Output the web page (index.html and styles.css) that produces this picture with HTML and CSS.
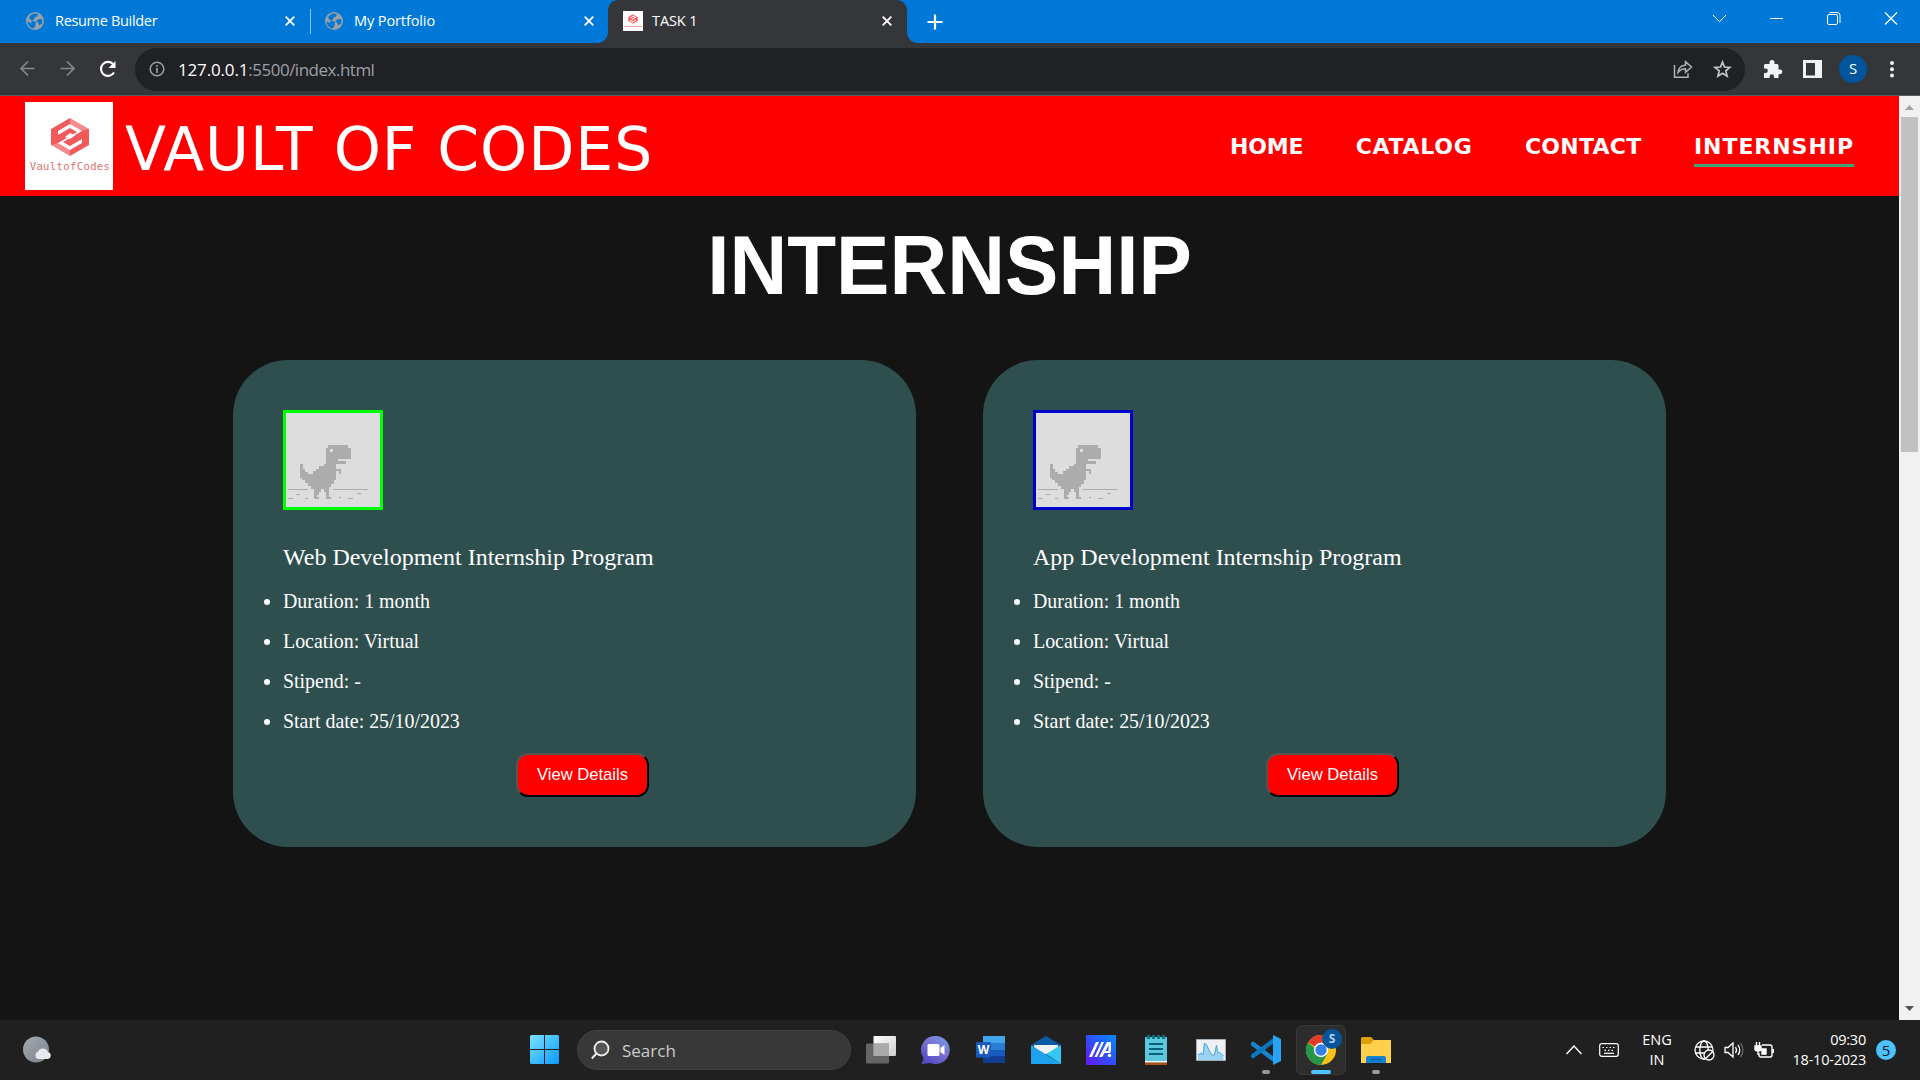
FILE: index.html
```html
<!DOCTYPE html>
<html lang="en">
<head>
<meta charset="utf-8">
<title>TASK 1</title>
<link rel="stylesheet" href="styles.css">
</head>
<body>
<svg class="defs" width="0" height="0">
  <defs>
    <symbol id="globe" viewBox="0 0 18 18"><circle cx="9" cy="9" r="9" fill="#9aa0a6"/><path d="M9 1.500 12 2l-1 2.500-2.500 1-.5 2L5.500 9H8l2 1.500L9.500 13 8 16.500C4 16 1.500 13 1.500 9.500L5 11l1-2-3-3C4 3 6.500 1.500 9 1.500ZM13 7l3.500.5-.5 4-2.500 2-1.500-3-2-1Z" fill="#0078d7"/></symbol>
    <symbol id="cross" viewBox="0 0 12 12"><path d="M1.700 1.700l8.600 8.600M10.300 1.700l-8.600 8.600" stroke="#fff" stroke-width="1.900"/></symbol>
    <symbol id="knot" viewBox="0 0 40 40"><path d="M20 1V7L8 14V19L1 23V12Z" fill="#f05a5a"/><path d="M20 1 39 12V17L32 14 20 7Z" fill="#f58a8a"/><path d="M20 39V33L32 26V21L39 17V28Z" fill="#f05a5a"/><path d="M20 39 1 28V23L8 26 20 33Z" fill="#f58a8a"/><path d="M1 22 20 11 27 15 8 26 1 28Z" fill="#f05a5a"/><path d="M39 18 20 29 13 25 32 14 39 12Z" fill="#f05a5a"/><path d="M20 16 25 18.500 20 22 15 20Z" fill="#fff"/></symbol>
    <symbol id="dino" viewBox="0 0 94 94" shape-rendering="crispEdges"><path fill="#ddd" d="M0 0h94v94H0z"/><path fill="#acacac" d="M42 32h20v3h3v11H52v2h8v3H50v5h5v5h-2v-3h-3v9h-2v4h-3v3h-2v10h2v2h-5v-7h-2v-3h-3v3h-2v3h-2v2h2v2h-5V76h-3v-3h-3v-3h-3v-3h-3v-2h-2V51h3v5h2v3h3v2h5v-3h3v-2h3v-3h5v-2h2V35h2z"/><path fill="#ddd" d="M44 36h3v3h-3z"/><path fill="#acacac" d="M2 76h20v1H2zM47 76h35v1H47zM10 81h4v1h-4zM2 85h5v1H2zM19 85h3v1h-3zM53 84h2v1h-2zM62 85h5v1h-5zM71 80h4v1h-4z"/></symbol>
  </defs>
</svg>
<div class="screen">
  <div class="tabs">
    <div class="tab"><svg class="fav" width="18" height="18"><use href="#globe"/></svg><span class="tab-name t1">Resume Builder</span><svg width="12" height="12"><use href="#cross"/></svg></div>
    <div class="sep"></div>
    <div class="tab second"><svg class="fav" width="18" height="18"><use href="#globe"/></svg><span class="tab-name t2">My Portfolio</span><svg width="12" height="12"><use href="#cross"/></svg></div>
    <div class="tab active"><span class="mini"><svg width="10" height="10"><use href="#knot"/></svg><i></i></span><span class="tab-name t3">TASK 1</span><svg width="12" height="12"><use href="#cross"/></svg></div>
    <svg class="plus" width="16" height="16" viewBox="0 0 16 16"><path d="M8 .5v15M.5 8h15" stroke="#fff" stroke-width="2.200"/></svg>
    <div class="window">
      <svg width="57" height="36" viewBox="0 0 57 36"><path d="M22 15l6.500 6.800L35 15" fill="none" stroke="#fff"/></svg>
      <svg width="57" height="36" viewBox="0 0 57 36"><path d="M22 18.500h13" stroke="#fff"/></svg>
      <svg width="57" height="36" viewBox="0 0 57 36" fill="none" stroke="#fff"><rect x="22.500" y="14.500" width="10" height="10" rx="1.500"/><path d="M24.500 12.500h7.500a3 3 0 0 1 3 3V23"/></svg>
      <svg width="57" height="36" viewBox="0 0 57 36"><path d="M23 12.500l12 12M35 12.500l-12 12" stroke="#fff" stroke-width="1.200"/></svg>
    </div>
  </div>
  <div class="toolbar">
    <svg class="nav-icon" width="40" height="40" viewBox="0 0 40 40" fill="none" stroke="#85878a" stroke-width="1.700"><path d="M27.500 19.500H14.500M21 12.500l-7 7 7 7"/></svg>
    <svg class="nav-icon" width="40" height="40" viewBox="0 0 40 40" fill="none" stroke="#85878a" stroke-width="1.700"><path d="M13.500 19.500h13M20 12.500l7 7-7 7"/></svg>
    <svg class="nav-icon" width="40" height="40" viewBox="0 0 40 40"><path d="M27 23.500A7 7 0 1 1 26 15" fill="none" stroke="#fff" stroke-width="2.100"/><path d="M28.500 12v7h-7z" fill="#fff"/></svg>
    <div class="omnibox">
      <svg width="16" height="16" viewBox="0 0 16 16"><circle cx="8" cy="8" r="6.800" fill="none" stroke="#9aa0a6" stroke-width="1.500"/><path d="M8 7v5M8 4v1.700" stroke="#9aa0a6" stroke-width="1.700"/></svg>
      <span class="url"><b>127.0.0.1</b>:5500/index.html</span>
      <svg class="share" width="20" height="20" viewBox="0 0 20 20" fill="none" stroke="#b0b2b5" stroke-width="1.500"><path d="M1.500 6v12.300H15v-4M5 13.500C5.500 9 8 6.500 12.500 6.300V2.700L18.500 8l-6 5.300v-3.500C9 9.800 7 11 5 13.500Z"/></svg>
      <svg width="20" height="20" viewBox="0 0 20 20"><path d="M10.500 3l2 5 5.500.4-4.200 3.500 1.300 5.300-4.600-2.900-4.600 2.900 1.300-5.300L3 8.400 8.500 8Z" fill="none" stroke="#c4c6c9" stroke-width="1.700"/></svg>
    </div>
    <div class="extras">
      <svg width="40" height="28" viewBox="0 0 40 28"><path d="M13 9h4.500V7.500a2.500 2.500 0 0 1 5 0V9H25a1.500 1.500 0 0 1 1.500 1.500v4H28a2.300 2.300 0 0 1 0 4.700h-1.500V23H22v-1.500a2.200 2.200 0 0 0-4.400 0V23H12v-5h1.500a2.300 2.300 0 0 0 0-4.600H12V10Z" fill="#f1f3f4"/></svg>
      <svg width="40" height="28" viewBox="0 0 40 28"><path fill="#f1f3f4" fill-rule="evenodd" d="M11 5h19v18H11zm3 3v12.500h9V8z"/></svg>
      <span class="avatar">S</span>
      <svg width="8" height="20" viewBox="0 0 8 20" fill="#f1f3f4"><circle cx="4" cy="4" r="2"/><circle cx="4" cy="10.200" r="2"/><circle cx="4" cy="16.500" r="2"/></svg>
    </div>
  </div>
  <div class="viewport">
    <div class="page">
      <header class="header">
        <div class="logo"><svg width="40" height="40"><use href="#knot"/></svg><span>VaultofCodes</span></div>
        <span class="brand">VAULT OF CODES</span>
        <nav class="menu"><a class="home">HOME</a><a class="catalog">CATALOG</a><a class="contact">CONTACT</a><a class="current">INTERNSHIP</a></nav>
      </header>
      <h1>INTERNSHIP</h1>
      <div class="cards">
        <article class="card">
          <svg class="pic green" width="94" height="94"><use href="#dino"/></svg>
          <h2>Web Development Internship Program</h2>
          <ul><li>Duration: 1 month</li><li>Location: Virtual</li><li>Stipend: -</li><li>Start date: 25/10/2023</li></ul>
          <button>View Details</button>
        </article>
        <article class="card">
          <svg class="pic blue" width="94" height="94"><use href="#dino"/></svg>
          <h2>App Development Internship Program</h2>
          <ul><li>Duration: 1 month</li><li>Location: Virtual</li><li>Stipend: -</li><li>Start date: 25/10/2023</li></ul>
          <button>View Details</button>
        </article>
      </div>
    </div>
    <div class="scrollbar">
      <svg width="21" height="21" viewBox="0 0 21 21"><path d="M6 14l4.500-5L15 14Z" fill="#a3a3a3"/></svg>
      <div class="thumb"></div>
      <svg class="down" width="21" height="21" viewBox="0 0 21 21"><path d="M6 7l4.500 5L15 7Z" fill="#505050"/></svg>
    </div>
  </div>
  <footer class="taskbar">
    <svg class="weather" width="30" height="30" viewBox="0 0 30 30"><defs><linearGradient id="moon" x2="1" y2="1"><stop stop-color="#a3a9b0"/><stop offset="1" stop-color="#7b8289"/></linearGradient></defs><circle cx="13" cy="14.500" r="13" fill="url(#moon)"/><path d="M15 24a4 4 0 0 1 0-7.500 5.500 5.500 0 0 1 10 .5 3.600 3.600 0 0 1 0 7Z" fill="#e6e9ed"/></svg>
    <svg class="start" width="30" height="30" viewBox="0 0 30 30"><defs><linearGradient id="win" x2="1" y2="1" gradientUnits="objectBoundingBox"><stop stop-color="#7be1ff"/><stop offset="1" stop-color="#0a9bff"/></linearGradient></defs><path fill="url(#win)" d="M1.500 0H14v14H0V1.500Q0 0 1.500 0ZM15 0h12.500Q29 0 29 1.500V14H15ZM0 15h14v14H1.500Q0 29 0 27.500ZM15 15h14v12.500Q29 29 27.500 29H15Z"/></svg>
    <div class="search"><svg width="20" height="20" viewBox="0 0 20 20"><circle cx="10.500" cy="8.500" r="7" fill="#555" stroke="#eee" stroke-width="1.800"/><path d="M5.500 13.500 .8 18.500" stroke="#eee" stroke-width="2"/></svg><span>Search</span></div>
    <div class="apps">
      <svg class="app" viewBox="0 0 30 30"><defs><linearGradient id="tv" x2="1" y2="1"><stop stop-color="#fff"/><stop offset="1" stop-color="#ccc"/></linearGradient></defs><rect x="7.500" y="1" width="22.500" height="20" rx="1" fill="url(#tv)"/><rect y="8.500" width="23" height="20" rx="1" fill="#777" opacity=".8"/><path d="M7.500 8.500H23v12.500H7.500z" fill="#aaa"/></svg>
      <svg class="app" viewBox="0 0 30 30"><defs><linearGradient id="ch" x1="1" y1="0" x2=".3" y2="1"><stop stop-color="#6fa0ee"/><stop offset=".5" stop-color="#7a72d0"/><stop offset="1" stop-color="#574bc5"/></linearGradient></defs><path d="M14.500 1a14 14 0 1 1-5 27l-9 1 2-6A14 14 0 0 1 14.500 1Z" fill="url(#ch)"/><rect x="6.500" y="9" width="12" height="12" rx="1.500" fill="#fff"/><path d="M19.500 13l4-3v10l-4-3Z" fill="#fff"/></svg>
      <svg class="app" viewBox="0 0 30 30"><path d="M7 1h22v7H7z" fill="#41a5ee"/><path d="M7 8h22v7H7z" fill="#2b7cd3"/><path d="M7 15h22v6H7z" fill="#185abd"/><path d="M7 21h22v7H7z" fill="#103f91"/><rect y="7" width="15" height="15.500" rx="1" fill="#185abd"/><text x="7.500" y="19" text-anchor="middle" font-family="Open Sans" font-weight="700" font-size="12" fill="#fff">W</text></svg>
      <svg class="app" viewBox="0 0 30 30"><path d="M0 10 15 1l15 9-15 10Z" fill="#0a5aa6"/><path d="M3 10h24v9H3z" fill="#f1f1f1"/><path d="M0 10v19h30L0 10Z" fill="#1ea2ee"/><path d="M30 10v19L15 19Z" fill="#35c6f2"/></svg>
      <svg class="app" viewBox="0 0 30 30"><defs><linearGradient id="my" x1="0" y1="1" x2="1" y2="0"><stop stop-color="#6414f5"/><stop offset="1" stop-color="#008cff"/></linearGradient></defs><path fill="url(#my)" d="M0 0h30v30H0z"/><path d="M3 22 10 7h3L6 22ZM8.500 22l7-15h2.500l-7 15Z" fill="#fff"/><path d="M13 22 21 7h4v9h-2.500v-6l-3 6h5v2h-6l-2.300 4Z" fill="#fff"/><circle cx="23.500" cy="20.500" r="1.700" fill="#fff"/></svg>
      <svg class="app" viewBox="0 0 30 30"><rect x="4" y="2" width="22" height="27" rx="1" fill="#5cc8de"/><path d="M4 26h22v1.500H4z" fill="#fff"/><path d="M4 27.500h22V30H4z" fill="#a85215"/><path d="M8 9h14M8 14h14M8 19h14" stroke="#075f78" stroke-width="1.800"/><path d="M7.500 0v4M12.500 0v4M17.500 0v4M22.500 0v4" stroke="#087488" stroke-width="2.800"/></svg>
      <svg class="app" viewBox="0 0 30 30"><path d="M.5 4.500h29v21H.5z" fill="#eef0f4" stroke="#a3adb5"/><path d="M2 25v-5l3-2 2 2L8.500 8l2 2 3 6 2 4h3l2-10 1 7 3 1 3 3v4Z" fill="#9bd3f5"/><path d="M2 20l3-2 2 2L8.500 8l2 2 3 6 2 4h3l2-10 1 7 3 1 3 3" fill="none" stroke="#42a7dc"/></svg>
      <span class="slot"><svg viewBox="0 0 30 30"><path d="M2 9 22 24" stroke="#1686d0" stroke-width="4.500" stroke-linecap="round"/><path d="M2 21 22 6" stroke="#0877bd" stroke-width="4.500" stroke-linecap="round"/><path d="M22 0 30 4v22l-8 4Z" fill="#27a5f4"/></svg><i class="dot"></i></span>
      <span class="slot chrome"><svg viewBox="0 0 30 30"><circle cx="15" cy="15" r="15" fill="#fbc116"/><path d="M15 15 2 7.500A15 15 0 0 1 28 7.500H15Z" fill="#e33b2e"/><path d="M2 7.500A15 15 0 0 0 15 30l6.500-11.500H15Z" fill="#24964a"/><circle cx="15" cy="15" r="7.200" fill="#fff"/><circle cx="15" cy="15" r="5.700" fill="#347fe8"/></svg><b class="badge">S</b><i class="dot"></i></span>
      <span class="slot"><svg viewBox="0 0 30 30"><path d="M0 3.500Q0 2 1.500 2H10l3 3h16q1 0 1 1v8H0Z" fill="#dda000"/><path d="M0 9h9l4-4h16q1 0 1 1v22H0Z" fill="#ffd04b"/><path d="M5 28v-5q0-2 2-2h16q2 0 2 2v5Z" fill="#1484d2"/><path d="M9 24.500h12" stroke="#0860a8" stroke-width="1.500"/></svg><i class="dot"></i></span>
    </div>
    <div class="tray">
      <svg width="16" height="10" viewBox="0 0 16 10"><path d="M.5 9 8 1l7.500 8" fill="none" stroke="#fff" stroke-width="1.400"/></svg>
      <svg class="keyboard" width="20" height="14" viewBox="0 0 20 14" fill="none" stroke="#fff" stroke-width="1.200"><rect x=".7" y=".7" width="18.600" height="12.600" rx="2"/><path d="M3.500 4.500h13" stroke-dasharray="1.500 2"/><path d="M5.500 7.300h10" stroke-dasharray="1.500 2"/><path d="M5 10.300h10"/></svg>
      <div class="lang">ENG<br>IN</div>
      <svg class="net" width="21" height="21" viewBox="0 0 21 21" fill="none" stroke="#fff" stroke-width="1.300"><circle cx="10" cy="10" r="9"/><ellipse cx="10" cy="10" rx="4.200" ry="9"/><path d="M2 7h16M2 13h9"/><circle cx="15" cy="15" r="5" fill="#202020"/><path d="M11.700 18.500 18.500 11.700"/></svg>
      <svg class="sound" width="20" height="18" viewBox="0 0 20 18" fill="none" stroke="#fff" stroke-width="1.300"><path d="M1 6.500h3L9 2v14l-5-4.500H1ZM11.500 6q2 3 0 6M14 4q3.500 5 0 10"/><path d="M16.500 2q5 7 0 14" stroke="#666"/></svg>
      <svg class="power" width="20" height="17" viewBox="0 0 20 17" fill="none" stroke="#fff" stroke-width="1.400"><path d="M8 3h8q2 0 2 2v8q0 2-2 2H7q-2 0-2-2v-2"/><path d="M1 4h6v3q0 2-3 2t-3-2ZM4 9v4M2.500 0v4M5.500 0v4M8 7h4v5H8Z" fill="#fff"/><path d="M19 7v4" stroke-width="2"/></svg>
      <div class="clock"><span class="time">09:30</span><span class="date">18-10-2023</span></div>
      <span class="count">5</span>
    </div>
  </footer>
</div>
</body>
</html>
```
FILE: styles.css
```css
* { box-sizing: border-box; }
body { margin: 0; overflow: hidden; background: #141414; }
svg { display: block; flex: none; }
.defs { position: absolute; }
.screen { width: 1920px; height: 1080px; display: flex; flex-direction: column; font-family: "Open Sans", sans-serif; color: #fff; }
.tabs { height: 43px; flex: none; background: #0078d7; display: flex; align-items: center; }
.tab { display: flex; align-items: center; width: 310px; height: 43px; padding: 0 14px 1px 26px; }
.tab-name { flex: 1; margin-left: 11px; padding-bottom: 2px; font-size: 14.5px; white-space: nowrap; }
.t1 { letter-spacing: -.32px; }
.t2 { letter-spacing: -.1px; }
.t3 { letter-spacing: -.1px; margin-left: 9px; }
.sep { width: 1px; height: 25px; background: #8cc4f0; }
.second { width: 297px; padding-left: 14px; padding-right: 13px; }
.active { width: 299px; background: #35363a; border-radius: 10px 10px 0 0; padding-left: 15px; padding-right: 14px; position: relative; }
.active::before, .active::after { content: ""; position: absolute; bottom: 0; width: 10px; height: 10px; }
.active::before { left: -10px; background: radial-gradient(circle at 0 0, transparent 9.5px, #35363a 10px); }
.active::after { right: -10px; background: radial-gradient(circle at 100% 0, transparent 9.5px, #35363a 10px); }
.mini { width: 20px; height: 20px; background: #fff; display: flex; flex-direction: column; align-items: center; padding-top: 3px; }
.mini i { width: 18px; height: 1px; background: #f0a0a0; margin-top: 2px; }
.plus { margin-left: 20px; }
.window { margin-left: auto; padding-right: 1px; display: flex; height: 36px; align-self: flex-start; }
.toolbar { height: 53px; flex: none; display: flex; align-items: center; background: #35363a; border-bottom: 1px solid #5b5c60; padding-left: 7px; }
.nav-icon:nth-child(3) { margin-right: 8px; }
.omnibox { width: 1610px; height: 43px; border-radius: 22px; background: #202124; display: flex; align-items: center; padding: 0 13px 0 14px; }
.url { font-size: 17px; margin-left: 13px; color: #9aa0a6; letter-spacing: -.5px; }
.url b { font-weight: 400; color: #fff; letter-spacing: -.16px; }
.share { margin: 0 19px 0 auto; }
.extras { display: flex; align-items: center; margin-left: 7px; }
.avatar { width: 28px; height: 28px; border-radius: 50%; background: #00559d; font-size: 15px; line-height: 27px; text-align: center; margin: 0 21px 0 7px; }
.viewport { height: 924px; flex: none; display: flex; background: #141414; }
.page { width: 1899px; }
.header { height: 100px; background: red; display: flex; align-items: center; padding: 0 45px 0 25px; }
.logo { width: 88px; height: 88px; background: #fff; padding: 15px 0 0 2px; display: flex; flex-direction: column; align-items: center; }
.logo span { font: 10.5px/15px "DejaVu Sans Mono", monospace; letter-spacing: .4px; color: #e07070; margin-top: 2px; }
.brand { font: 60px/70px "DejaVu Sans", sans-serif; letter-spacing: .93px; margin-left: 12px; padding-top: 6px; }
.menu { margin-left: auto; display: flex; gap: 52.5px; font: bold 22px/28px "DejaVu Sans", sans-serif; }
.menu a { height: 41px; padding-top: 7px; border-bottom: 3px solid transparent; }
.home { letter-spacing: -.2px; }
.catalog { letter-spacing: .7px; }
.contact { letter-spacing: .25px; }
.menu .current { border-color: #3fa37a; letter-spacing: .95px; }
h1 { margin: 25px 0 47px; font: bold 80px/92px "Liberation Sans", sans-serif; text-align: center; transform: scaleY(1.045); transform-origin: 0 75px; }
.cards { display: flex; gap: 67px; justify-content: center; }
.card { width: 683px; height: 487px; padding: 50px; background: #2f4f4f; border-radius: 55px; font-family: "Liberation Serif", serif; }
.pic { width: 100px; height: 100px; border: 3px solid lime; }
.blue { border-color: #0000cd; }
h2 { font-size: 24px; line-height: 28px; font-weight: 400; margin: 33px 0 10px; }
ul { margin: 0; padding: 0; font-size: 19.9px; line-height: 40px; }
button { display: block; width: 133px; height: 44px; margin: 12px auto 0 233px; padding: 0; background: red; color: #fff; border: 2px outset #000; border-radius: 12px; font: 16.6px "Liberation Sans", sans-serif; }
.scrollbar { width: 21px; background: #f1f1f1; display: flex; flex-direction: column; align-items: center; }
.thumb { width: 17px; height: 335px; background: #c1c1c1; }
.down { margin-top: auto; }
.taskbar { height: 60px; flex: none; background: #202020; display: flex; align-items: center; }
.weather { margin-left: 23px; }
.start { margin-left: 477px; }
.search { width: 274px; height: 40px; border-radius: 20px; background: #383838; border: 1px solid #404040; margin-left: 17px; display: flex; align-items: center; padding-left: 13px; font-size: 17px; color: #ccc; gap: 11px; }
.apps { display: flex; gap: 25px; margin-left: 15px; }
.app, .slot { width: 30px; height: 30px; }
.slot { position: relative; display: block; }
.dot { position: absolute; left: 11px; top: 35px; width: 8px; height: 4px; border-radius: 2px; background: #999; }
.chrome::before { content: ""; position: absolute; inset: -10px; background: #2d2d2d; border: 1px solid #383838; border-radius: 6px; }
.chrome svg { position: relative; }
.chrome .dot { left: 5px; width: 20px; background: #4cc2ff; }
.badge { position: absolute; left: 16px; top: -6px; width: 20px; height: 20px; border-radius: 50%; background: #07559a; color: #b5d2e9; font-size: 12px; line-height: 20px; text-align: center; }
.tray { margin-left: auto; display: flex; align-items: center; padding-right: 24px; }
.keyboard { margin-left: 17px; }
.lang { width: 34px; margin-left: 21px; font-size: 14.5px; line-height: 20px; letter-spacing: 0; text-align: center; }
.net { margin-left: 20px; }
.sound { margin-left: 9px; }
.power { margin-left: 10px; }
.clock { width: 76px; margin-left: 16px; display: flex; flex-direction: column; align-items: flex-end; font-size: 14.5px; line-height: 20px; letter-spacing: -.22px; }
.count { width: 20px; height: 20px; border-radius: 50%; background: #4cc2ff; color: #111; font-size: 15px; line-height: 20px; text-align: center; margin-left: 10px; }
```
